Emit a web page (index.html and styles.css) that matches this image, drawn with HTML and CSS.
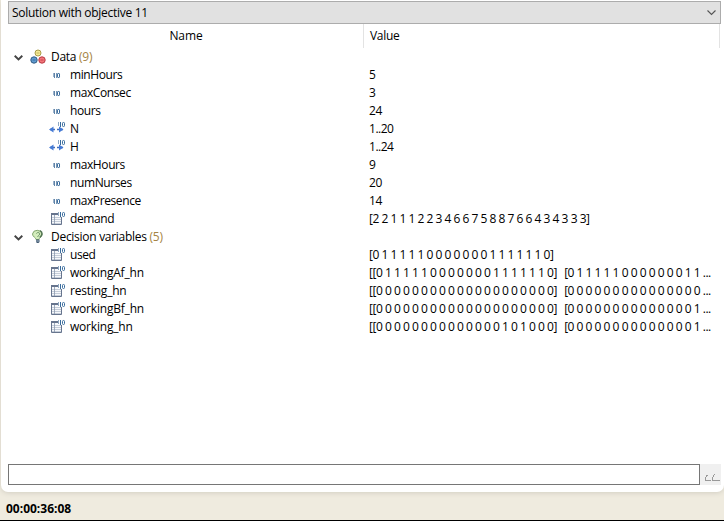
FILE: index.html
```html
<!DOCTYPE html>
<html lang="en">
<head>
<meta charset="utf-8">
<title>Solution</title>
<link rel="stylesheet" href="styles.css">
</head>
<body>
<svg width="0" height="0" class="defs">
  <defs>
    <symbol id="int" viewBox="0 0 16 16"><path d="M4 6h1v4H4z" fill="#9db3ca"/><path d="M5 6h1v5H5z" fill="#5d83a9"/><path d="M7 6h1v5H7z" fill="#7896b5"/><rect x="8.500" y="6.500" width="2" height="4" rx=".6" fill="none" stroke="#386b9c"/></symbol>
    <symbol id="range" viewBox="0 0 16 16"><path d="M1 8.500h5M8 8.500h6" stroke="#406dbc" stroke-width="1.400"/><path d="M0 8.500l4.500-3v6zM14.500 8.500l-4.500-3v6z" fill="#467bd5"/><path d="M9 1h1v4H9z" fill="#8fa9c4"/><path d="M11 1h1v5h-1z" fill="#386b9c"/><rect x="13.500" y="1.500" width="2" height="4" rx=".8" fill="#fff" stroke="#386b9c"/></symbol>
    <symbol id="table" viewBox="0 0 16 16"><path d="M2.500 2.500h10v11h-10z" fill="#f6f8fb" stroke="#67758e"/><path d="M2 2h8v2H2z" fill="#66748d"/><path d="M3 6.500h9M3 8.500h9M3 10.500h9M3 12.500h9" stroke="#c5cdd9"/><path d="M5.500 4v9" stroke="#8a98ad" stroke-width=".8"/><path d="M9 0h7v6H9z" fill="#fff"/><path d="M9 1h1v4H9z" fill="#8fa9c4"/><path d="M11 1h1v5h-1z" fill="#386b9c"/><rect x="13.500" y="1.500" width="2" height="4" rx=".9" fill="none" stroke="#386b9c"/></symbol>
    <symbol id="balls" viewBox="0 0 16 16"><circle cx="8" cy="4" r="3" fill="#f3e995" stroke="#a99c48"/><circle cx="4" cy="11" r="3.200" fill="#619bd0" stroke="#315c84"/><circle cx="12" cy="11" r="3.200" fill="#f27579" stroke="#b93943"/><path d="M6.500 4h3" stroke="#c5b85f"/><path d="M2.500 11h3" stroke="#396f9f"/><path d="M10.500 11h3" stroke="#c94450"/></symbol>
    <symbol id="bulb" viewBox="0 0 16 16"><path d="M6 10.500c0-2-3.500-2.700-3.500-5.500a4.800 4.300 0 0 1 9.500 0c0 3-3 3.700-3 5.500z" fill="#d4edbc" stroke="#82a66e"/><path d="M6.500 4.500c.5-1.500 3.500-1.200 3.200.5-.2 1.500-2 1.500-2 3" fill="none" stroke="#6d9467"/><path d="M10 1.700c3 1.700 2.500 4.600-.2 6.600" fill="none" stroke="#527453" stroke-width="1.500"/><path d="M6 10.500h3.500V13l-1 1h-1.500L6 13z" fill="#445b73"/><path d="M6 12h3.500" stroke="#9bafbf"/></symbol>
    <symbol id="open" viewBox="0 0 9 6"><path d="M.7.800l3.800 3.700L8.300.800" fill="none" stroke="#444" stroke-width="1.900"/></symbol>
  </defs>
</svg>
<main class="panel">
  <div class="select"><span>Solution with objective 11</span><svg class="drop" viewBox="0 0 9 6"><path d="M.5.500l4 4 4-4" fill="none" stroke="#555" stroke-width="1.100"/></svg></div>
  <div class="head"><div class="name-head">Name</div><div class="value-head">Value</div></div>
  <div class="tree">
    <div class="row group"><svg class="twist"><use href="#open"/></svg><svg class="icon"><use href="#balls"/></svg><span>Data <i>(9)</i></span></div>
    <div class="row"><div class="name"><svg class="icon"><use href="#int"/></svg><span>minHours</span></div><div class="value">5</div></div>
    <div class="row"><div class="name"><svg class="icon"><use href="#int"/></svg><span>maxConsec</span></div><div class="value">3</div></div>
    <div class="row"><div class="name"><svg class="icon"><use href="#int"/></svg><span>hours</span></div><div class="value">24</div></div>
    <div class="row"><div class="name"><svg class="icon"><use href="#range"/></svg><span>N</span></div><div class="value">1..20</div></div>
    <div class="row"><div class="name"><svg class="icon"><use href="#range"/></svg><span>H</span></div><div class="value">1..24</div></div>
    <div class="row"><div class="name"><svg class="icon"><use href="#int"/></svg><span>maxHours</span></div><div class="value">9</div></div>
    <div class="row"><div class="name"><svg class="icon"><use href="#int"/></svg><span>numNurses</span></div><div class="value">20</div></div>
    <div class="row"><div class="name"><svg class="icon"><use href="#int"/></svg><span>maxPresence</span></div><div class="value">14</div></div>
    <div class="row"><div class="name"><svg class="icon"><use href="#table"/></svg><span>demand</span></div><div class="value">[2 2 1 1 1 2 2 3 4 6 6 7 5 8 8 7 6 6 4 3 4 3 3 3]</div></div>
    <div class="row group"><svg class="twist"><use href="#open"/></svg><svg class="icon"><use href="#bulb"/></svg><span>Decision variables <i>(5)</i></span></div>
    <div class="row"><div class="name"><svg class="icon"><use href="#table"/></svg><span>used</span></div><div class="value">[0 1 1 1 1 1 0 0 0 0 0 0 0 1 1 1 1 1 1 0]</div></div>
    <div class="row"><div class="name wide"><svg class="icon"><use href="#table"/></svg><span>workingAf_hn</span></div><div class="value">[[0 1 1 1 1 1 0 0 0 0 0 0 0 1 1 1 1 1 1 0]  <span>[0 1 1 1 1 1 0 0 0 0 0 0 0 1 1 ...</span></div></div>
    <div class="row"><div class="name wide"><svg class="icon"><use href="#table"/></svg><span>resting_hn</span></div><div class="value">[[0 0 0 0 0 0 0 0 0 0 0 0 0 0 0 0 0 0 0 0]  <span>[0 0 0 0 0 0 0 0 0 0 0 0 0 0 0 ...</span></div></div>
    <div class="row"><div class="name wide"><svg class="icon"><use href="#table"/></svg><span>workingBf_hn</span></div><div class="value">[[0 0 0 0 0 0 0 0 0 0 0 0 0 0 0 0 0 0 0 0]  <span>[0 0 0 0 0 0 0 0 0 0 0 0 0 0 1 ...</span></div></div>
    <div class="row"><div class="name wide"><svg class="icon"><use href="#table"/></svg><span>working_hn</span></div><div class="value">[[0 0 0 0 0 0 0 0 0 0 0 0 0 0 1 0 1 0 0 0]  <span>[0 0 0 0 0 0 0 0 0 0 0 0 0 0 1 ...</span></div></div>
  </div>
  <div class="entry"><div class="field"></div><div class="more"><svg viewBox="0 0 21 21"><path d="M5 16.500h6M12 16.500h8M5.500 16v-3M6.500 13v-2M7 11.500h1M12.500 16v-3M13.500 13v-2M14 10.500h1" fill="none" stroke="#999"/></svg></div></div>
</main>
<footer>00:00:36:08</footer>
</body>
</html>
```
FILE: styles.css
```css
* { box-sizing: border-box; }
body {
  margin: 0;
  width: 724px;
  height: 521px;
  display: flex;
  flex-direction: column;
  overflow: hidden;
  background: #efebdf;
  color: #000;
  font: 12px/18px "Open Sans", "Noto Sans", sans-serif;
  letter-spacing: -.28px;
}
.defs { display: none; }
.panel {
  height: 492px;
  flex: none;
  display: flex;
  flex-direction: column;
  margin-left: 1px;
  padding: 1px 3px 7px 7px;
  background: #fff;
  border-radius: 0 0 7px 7px;
  box-shadow: 0 1px 5px #d2cec3;
}
.select {
  height: 23px;
  display: flex;
  align-items: center;
  justify-content: space-between;
  padding: 1px 4px 0 3px;
  border: 1px solid #acacac;
  background: #e1e1e1;
}
.drop { width: 9px; height: 6px; }
.head { display: flex; height: 24px; line-height: 24px; padding-right: 1px; }
.name-head { width: 356px; padding-left: 1px; text-align: center; border-right: 1px solid #e3e3e3; letter-spacing: -.1px; }
.value-head { flex: 1; padding-left: 6px; border-right: 1px solid #e3e3e3; }
.tree { flex: 1; }
.row { display: flex; height: 18px; }
.group { align-items: center; padding-left: 6px; }
.twist { width: 9px; height: 6px; margin: 1px 7px 0 0; }
.icon { width: 16px; height: 16px; flex: none; margin-right: 5px; }
.group i { font-style: normal; color: #a58444; }
.name { width: 361px; display: flex; align-items: center; padding-left: 41px; letter-spacing: -.4px; }
.wide { letter-spacing: -.2px; }
.value { white-space: pre; letter-spacing: -.485px; }
.value span { margin-left: 2px; }
.entry { display: flex; height: 21px; }
.field { width: 692px; border: 1px solid #767676; }
.more { width: 21px; background: #f0f0f0; }
.more svg { display: block; width: 21px; height: 21px; }
footer {
  flex: 1;
  padding: 8px 0 0 6px;
  border-bottom: 1px solid #000;
  font-weight: 700;
  letter-spacing: 0;
}
```
